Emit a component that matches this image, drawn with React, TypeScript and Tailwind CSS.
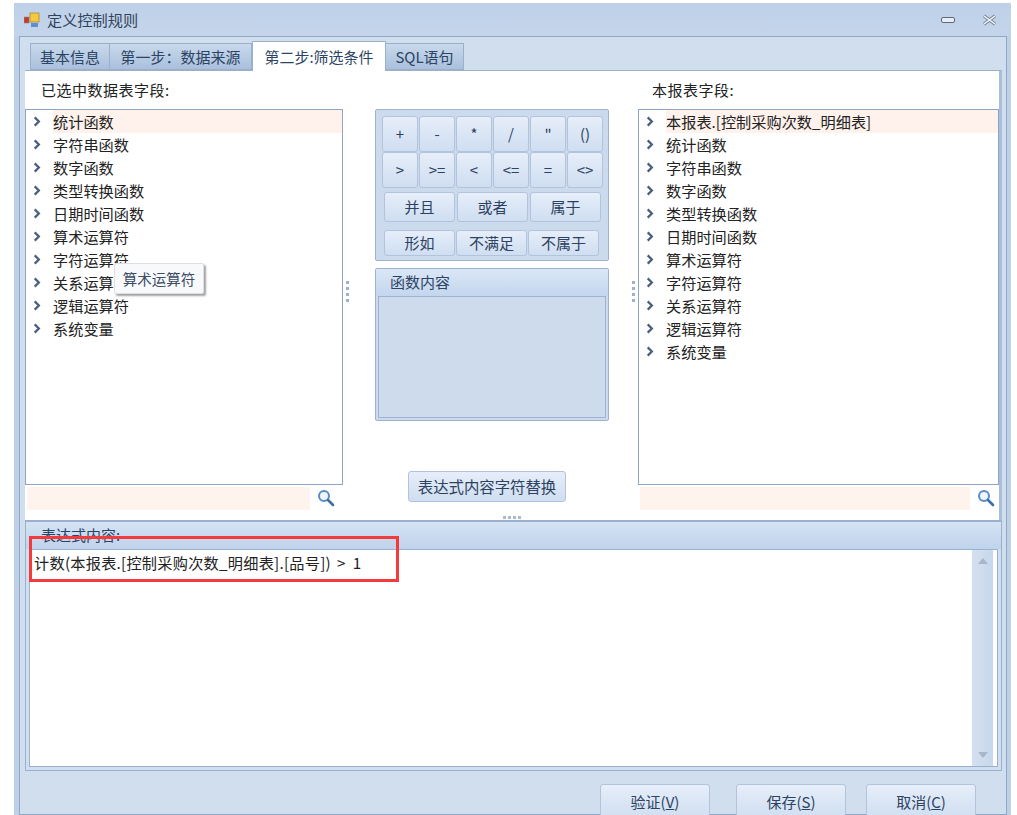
import type { ReactNode } from 'react'

const font = { fontFamily: '"Noto Sans CJK SC", sans-serif' }

const leftItems = ['统计函数', '字符串函数', '数字函数', '类型转换函数', '日期时间函数', '算术运算符', '字符运算符', '关系运算符', '逻辑运算符', '系统变量']
const rightItems = ['本报表.[控制采购次数_明细表]', ...leftItems]

const opRow1 = ['+', '-', '*', '/', '"', '()']
const opRow2 = ['>', '>=', '<', '<=', '=', '<>']

function TreeList({ items }: { items: string[] }) {
  return (
    <div className="flex-1 min-h-0 bg-white border border-[#8fa5c6]">
      {items.map((item, i) => (
        <div key={item} className="h-[23px] flex items-center text-[15.2px] text-[#222] leading-none">
          <svg viewBox="0 0 8 12" className="w-[8px] h-[11px] ml-[7px] mr-[12px] shrink-0" fill="none">
            <path d="M1.5 1.5L6 6l-4.500 4.500" stroke="#4a5f80" strokeWidth="2.5" />
          </svg>
          <span className={`h-full flex items-center flex-1 ${i === 0 ? 'bg-[#fff2ec]' : ''}`}>{item}</span>
        </div>
      ))}
    </div>
  )
}

function SearchRow({ width }: { width: string }) {
  return (
    <div className="h-[35px] flex items-start pt-[2px] pl-[2px]">
      <div className={`h-[23px] bg-[#fff3ed] ${width}`} />
      <svg viewBox="0 0 18 18" className="w-[18px] h-[18px] ml-[7px] mt-[2px]" fill="none">
        <circle cx="7" cy="7" r="5" stroke="#5b8cc4" strokeWidth="2" fill="#eef5fc" />
        <path d="M11 11l5 5" stroke="#3f6ea8" strokeWidth="2.6" strokeLinecap="round" />
      </svg>
    </div>
  )
}

function OpButton({ label, className }: { label: ReactNode; className: string }) {
  return (
    <button className={`flex items-center justify-center rounded-[3px] border border-[#b3c3dc] bg-gradient-to-b from-[#e6eef9] to-[#cfdef1] text-[#2d4260] ${className}`}>
      {label}
    </button>
  )
}

function Grip({ vertical }: { vertical?: boolean }) {
  return (
    <div className={`flex ${vertical ? 'flex-col gap-[3px]' : 'gap-[2px]'}`}>
      {[0, 1, 2, 3].map(i => (
        <span key={i} className={vertical ? 'w-[3px] h-[3px] bg-[#9db1cf]' : 'w-[3px] h-[3px] bg-[#a9bad3]'} />
      ))}
    </div>
  )
}

export default function App() {
  return (
    <div className="relative w-[1017px] h-[815px] bg-white overflow-hidden pt-[3px] pl-[14px] pr-[6px]" style={font}>
      <div className="h-[812px] flex flex-col bg-[#bdd0e8]">
        {/* Title bar */}
        <div className="h-[33px] shrink-0 flex items-center pl-[10px] pr-[14px] bg-gradient-to-b from-[#bed1e9] to-[#c4d5ea]">
          <svg viewBox="0 0 16 16" className="w-[16px] h-[16px] mr-[7px]">
            <rect x="0" y="5" width="5" height="6" fill="#c8372d" stroke="#8a8a8a" strokeWidth="0.6" />
            <rect x="6" y="1" width="9" height="9" fill="#f5c842" stroke="#a98a30" strokeWidth="0.8" />
            <rect x="7" y="11" width="7" height="4" fill="#5b8fd6" />
          </svg>
          <span className="text-[15.2px] text-[#32435c]">定义控制规则</span>
          <div className="ml-auto flex items-center gap-[27px]">
            <span className="block w-[14px] h-[6px] rounded-[2px] border border-[#5d6b80] bg-[#e8edf4]" />
            <svg viewBox="0 0 16 12" className="w-[15px] h-[12px]">
              <path d="M2 1.500l12 9M14 1.500l-12 9" stroke="#6a7687" strokeWidth="3.400" />
              <path d="M2 1.500l12 9M14 1.500l-12 9" stroke="#eef1f5" strokeWidth="1.600" />
            </svg>
          </div>
        </div>

        {/* Client area */}
        <div className="flex-1 min-h-0 ml-[5px] mr-[4px] border border-[#8fa8c8] bg-[#d0deee] flex flex-col pl-[5px] pr-[4px] pt-[5px]">
          {/* Tabs */}
          <div className="h-[28px] flex items-end pl-[5px] text-[15px] leading-none shrink-0">
            <div className="h-[27px] w-[80px] flex items-center justify-center border border-[#9ab0cd] bg-gradient-to-b from-[#c9d9ec] to-[#a9c0dc] text-[#2c4464]">基本信息</div>
            <div className="h-[27px] w-[142px] flex items-center justify-center border border-l-0 border-[#9ab0cd] bg-gradient-to-b from-[#c9d9ec] to-[#a9c0dc] text-[#2c4464]">第一步：数据来源</div>
            <div className="h-[30px] w-[134px] -mb-[1px] z-10 flex items-center justify-center border border-b-0 border-[#9ab0cd] bg-white text-[#2c4464]">第二步:筛选条件</div>
            <div className="h-[27px] w-[78px] flex items-center justify-center border border-l-0 border-[#9ab0cd] bg-gradient-to-b from-[#c9d9ec] to-[#a9c0dc] text-[#2c4464]">SQL语句</div>
          </div>

          {/* Tab page */}
          <div className="h-[451px] shrink-0 bg-white border-t border-b border-[#9ab0cd] border-r-[3px] border-r-[#a9bedb] flex">
            <div className="w-[318px] shrink-0 flex flex-col">
              <div className="h-[38px] shrink-0 pl-[16px] flex items-center text-[15px] text-[#222] tracking-[0.5px]">已选中数据表字段:</div>
              <TreeList items={leftItems} />
              <SearchRow width="w-[283px]" />
            </div>

            <div className="w-[32px] shrink-0 flex items-center justify-start pl-[3px] pb-[8px]">
              <Grip vertical />
            </div>

            {/* Middle column */}
            <div className="w-[234px] shrink-0 pt-[38px] flex flex-col">
              <div className="h-[152px] rounded-[2px] border border-[#9fb3d0] bg-[#cbdaec] pt-[6px] pl-[6px] flex flex-col">
                <div className="flex gap-[1px] text-[15px] h-[36px]">
                  {opRow1.map(op => <OpButton key={op} label={op} className="w-[36px] h-[36px]" />)}
                </div>
                <div className="flex gap-[1px] text-[15px] h-[36px]">
                  {opRow2.map(op => <OpButton key={op} label={op} className="w-[36px] h-[36px]" />)}
                </div>
                <div className="flex gap-[2px] text-[15px] mt-[4px] ml-[2px]">
                  {['并且', '或者', '属于'].map(op => <OpButton key={op} label={op} className="w-[71px] h-[30px]" />)}
                </div>
                <div className="flex gap-[1px] text-[15px] mt-[8px] ml-[2px]">
                  {['形如', '不满足', '不属于'].map(op => <OpButton key={op} label={op} className="w-[71px] h-[26px]" />)}
                </div>
              </div>

              <div className="mt-[7px] h-[153px] rounded-[2px] border border-[#9fb3d0] bg-[#cbdaec] flex flex-col">
                <div className="h-[27px] shrink-0 pl-[14px] flex items-center text-[15px] text-[#2c4464] bg-gradient-to-b from-[#dbe7f6] to-[#c3d6ee]">函数内容</div>
                <div className="flex-1 mx-[2px] mb-[2px] border border-[#9fb3d0] bg-[#cddbed]" />
              </div>

              <div className="mt-[50px] ml-[33px]">
                <OpButton label="表达式内容字符替换" className="w-[158px] h-[31px] text-[15.4px]" />
              </div>
            </div>

            <div className="w-[29px] shrink-0 flex items-center justify-end pr-[3px] pb-[8px]">
              <Grip vertical />
            </div>

            {/* Right column */}
            <div className="w-[361px] shrink-0 flex flex-col">
              <div className="h-[38px] shrink-0 pl-[14px] flex items-center text-[15px] text-[#222] tracking-[0.5px]">本报表字段:</div>
              <TreeList items={rightItems} />
              <SearchRow width="w-[330px]" />
            </div>
          </div>

          {/* Lower panel */}
          <div className="h-[250px] shrink-0 flex flex-col border border-[#9ab0cd] bg-[#cfdef0]">
            <div className="h-[27px] shrink-0 pl-[15px] flex items-center text-[15px] text-[#2c4464] bg-gradient-to-b from-[#d5e3f4] to-[#bfd3ec]">表达式内容:</div>
            <div className="flex-1 min-h-0 mx-[3px] mb-[3px] flex border border-[#9ab0cd] bg-white">
              <div className="flex-1 pl-[4px] text-[15.2px] leading-[24px] text-[#222] tracking-[0.25px]">
                计数(本报表.[控制采购次数_明细表].[品号])<span className="ml-[6px]">&gt;</span><span className="ml-[7px]">1</span>
              </div>
              <div className="w-[21px] mr-[4px] bg-gradient-to-r from-[#d3e0f0] to-[#c7d8ec] flex flex-col items-center justify-between py-[8px]">
                <span className="w-0 h-0 border-x-[5px] border-x-transparent border-b-[6px] border-b-[#a9b6c9]" />
                <span className="w-0 h-0 border-x-[5px] border-x-transparent border-t-[6px] border-t-[#a9b6c9]" />
              </div>
            </div>
          </div>

          {/* Footer buttons */}
          <div className="flex-1 flex pt-[13px] pl-[575px] gap-[26px] text-[15px]">
            <OpButton label={<>验证(<span className="underline">V</span>)</>} className="w-[110px] h-[36px] shrink-0" />
            <OpButton label={<>保存(<span className="underline">S</span>)</>} className="w-[110px] h-[36px] shrink-0" />
            <OpButton label={<>取消(<span className="underline">C</span>)</>} className="w-[110px] h-[36px] shrink-0 -ml-[6px]" />
          </div>
        </div>
      </div>

      {/* Hover tooltip over the tree */}
      <div className="absolute left-[114px] top-[263px] w-[90px] h-[31px] flex items-center justify-center rounded-[2px] bg-[#f8f9fb] border border-[#dcdfe4] shadow-[2px_2px_2px_rgba(90,90,90,0.55)] text-[14.5px] text-[#3c4c64]">算术运算符</div>

      {/* Red annotation box */}
      <div className="absolute left-[29px] top-[536px] w-[370px] h-[46px] border-[3px] border-[#f43b3b]" />

      {/* Splitter grip */}
      <div className="absolute left-[503px] top-[516px]"><Grip /></div>
    </div>
  )
}
